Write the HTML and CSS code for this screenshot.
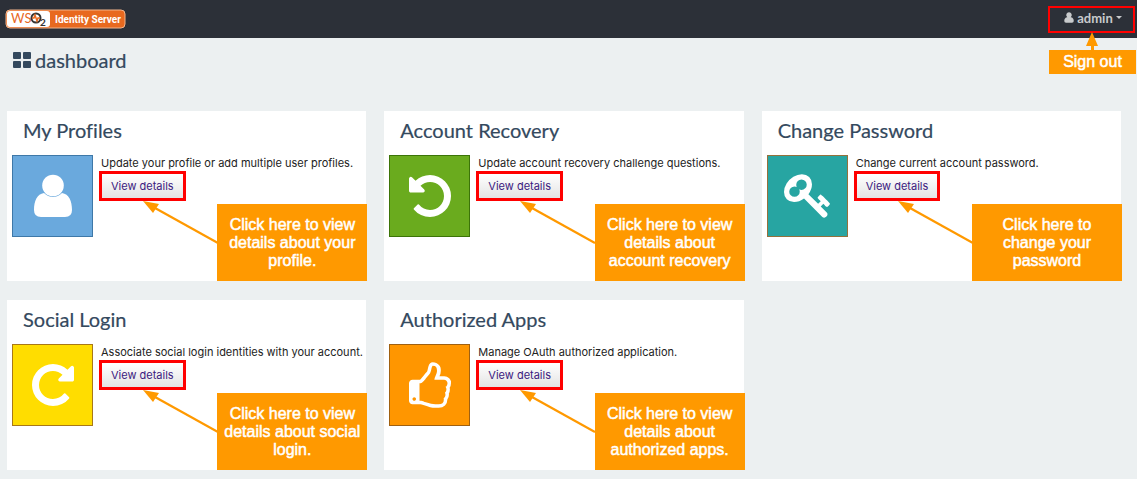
FILE: index.html
```html
<!DOCTYPE html>
<html lang="en">
<head>
<meta charset="utf-8">
<title>WSO2 Identity Server - Dashboard</title>
<link rel="stylesheet" href="styles.css">
</head>
<body>
<header class="topbar">
  <a class="brand" href="#" aria-label="WSO2 Identity Server">
    <svg class="brand-logo" viewBox="0 0 122 20" width="122" height="20">
      <rect x="1" y="1" width="119" height="18" rx="4" fill="#e8691f" stroke="#f3b58c"/>
      <rect x="2" y="2" width="43" height="16" rx="3" fill="#fff"/>
      <text class="brand-wso" x="6" y="14">WS</text>
      <circle cx="31" cy="9" r="4.500" fill="#fff" stroke="#333" stroke-width="2"/>
      <path d="M27 9h2l1-3 2 6 1-3h2" fill="none" stroke="#e8691f" stroke-width="1.500"/>
      <text class="brand-two" x="35" y="17">2</text>
      <text class="brand-name" x="50" y="14">Identity Server</text>
    </svg>
  </a>
  <div class="account">
    <button class="account-button" type="button">
      <svg viewBox="0 0 40 44" width="10" height="11"><path d="M20 1a11 11 0 0 1 7 19.500C35 21 39 27 39 36q0 7-7 7H8q-7 0-7-7C1 27 5 21 13 20.500A11 11 0 0 1 20 1z" fill="#c8cacc"/></svg>
      admin
      <svg viewBox="0 0 6 3" width="6" height="3"><path d="M0 0h6L3 3z" fill="#c8cacc"/></svg>
    </button>
    <div class="account-note">
      <svg class="account-arrow" viewBox="0 0 12 18" width="12" height="18"><path d="M6 0l6 14H8v4H5v-4H0z" fill="#f90"/></svg>
      Sign out
    </div>
  </div>
</header>

<main>
  <h1 class="page-title">
    <svg viewBox="0 0 18 16" width="18" height="16" fill="#34495e"><rect width="8" height="7" rx="1"/><rect x="10" width="8" height="7" rx="1"/><rect y="9" width="8" height="7" rx="1"/><rect x="10" y="9" width="8" height="7" rx="1"/></svg>
    dashboard
  </h1>

  <div class="cards">
    <section class="card">
      <h2>My Profiles</h2>
      <div class="card-body">
        <div class="tile tile-blue">
          <svg viewBox="0 0 44 44" width="44" height="44" fill="#fff"><path d="M13 19C6 20 3 27 3 36q0 7 7 7h24q7 0 7-7c0-9-3-16-10-17q-4 4-9 4t-9-4z"/><circle cx="22" cy="11.500" r="10.800"/></svg>
        </div>
        <div class="card-text">
          <p>Update your profile or add multiple user profiles.</p>
          <a class="details" href="#profiles">View details</a>
        </div>
      </div>
      <svg class="arrow" viewBox="0 0 75 43" width="75" height="43"><path d="M12 7L75 42" stroke="#f90" stroke-width="2.300"/><path d="M0 0l16 3-6 9z" fill="#f90"/></svg>
      <div class="note">Click here to view details about your profile.</div>
    </section>

    <section class="card">
      <h2>Account Recovery</h2>
      <div class="card-body">
        <div class="tile tile-green">
          <svg viewBox="0 128 1536 1536" width="42" height="42" fill="#fff"><path d="M1536 896q0 156-61 298t-164 245-245 164-298 61q-172 0-327-72.500T177 1387q-7-10-6.500-22.500t8.500-20.500l137-138q10-9 25-9 16 2 23 12 73 95 179 147t225 52q104 0 198.500-40.500T1130 1258t109.500-163.500T1280 896t-40.500-198.500T1130 534 966.500 424.500 768 384q-98 0-188 35.500T420 521l137 138q31 30 14 69-17 40-59 40H64q-26 0-45-19T0 704V256q0-42 40-59 39-17 69 14l130 129q107-101 244.500-156.500T768 128q156 0 298 61t245 164 164 245 61 298z"/></svg>
        </div>
        <div class="card-text">
          <p>Update account recovery challenge questions.</p>
          <a class="details" href="#recovery">View details</a>
        </div>
      </div>
      <svg class="arrow" viewBox="0 0 75 43" width="75" height="43"><path d="M12 7L75 42" stroke="#f90" stroke-width="2.300"/><path d="M0 0l16 3-6 9z" fill="#f90"/></svg>
      <div class="note">Click here to view details about account recovery</div>
    </section>

    <section class="card">
      <h2>Change Password</h2>
      <div class="card-body">
        <div class="tile tile-teal">
          <svg viewBox="0 128 1683 1600" width="46" height="44" fill="#fff"><path d="M832 512q0-80-56-136t-136-56-136 56-56 136q0 42 19 83-41-19-83-19-80 0-136 56t-56 136 56 136 136 56 136-56 56-136q0-42-19-83 41 19 83 19 80 0 136-56t56-136zm851 704q0 17-49 66t-66 49q-9 0-28.500-16t-36.500-33-38.500-40-24.500-26l-96 96 220 220q28 28 28 68 0 42-39 81t-81 39q-40 0-68-28l-671-671q-176 131-365 131-163 0-265.500-102.500T0 784q0-160 95-313t248-248 313-95q163 0 265.500 102.500T1024 496q0 189-131 365l355 355 96-96q-3-3-26-24.500t-40-38.500-33-36.500-16-28.500q0-17 49-66t66-49q13 0 23 10 6 6 46 44.500t82 79.500 86.500 86 73 78 28.500 41z"/></svg>
        </div>
        <div class="card-text">
          <p>Change current account password.</p>
          <a class="details" href="#password">View details</a>
        </div>
      </div>
      <svg class="arrow" viewBox="0 0 75 43" width="75" height="43"><path d="M12 7L75 42" stroke="#f90" stroke-width="2.300"/><path d="M0 0l16 3-6 9z" fill="#f90"/></svg>
      <div class="note">Click here to<br>change your<br>password</div>
    </section>

    <section class="card">
      <h2>Social Login</h2>
      <div class="card-body">
        <div class="tile tile-yellow">
          <svg viewBox="0 128 1536 1536" width="42" height="42" fill="#fff"><path transform="matrix(-1 0 0 1 1536 0)" d="M1536 896q0 156-61 298t-164 245-245 164-298 61q-172 0-327-72.500T177 1387q-7-10-6.500-22.500t8.500-20.500l137-138q10-9 25-9 16 2 23 12 73 95 179 147t225 52q104 0 198.500-40.500T1130 1258t109.500-163.500T1280 896t-40.500-198.500T1130 534 966.500 424.500 768 384q-98 0-188 35.500T420 521l137 138q31 30 14 69-17 40-59 40H64q-26 0-45-19T0 704V256q0-42 40-59 39-17 69 14l130 129q107-101 244.500-156.500T768 128q156 0 298 61t245 164 164 245 61 298z"/></svg>
        </div>
        <div class="card-text">
          <p>Associate social login identities with your account.</p>
          <a class="details" href="#social">View details</a>
        </div>
      </div>
      <svg class="arrow" viewBox="0 0 75 43" width="75" height="43"><path d="M12 7L75 42" stroke="#f90" stroke-width="2.300"/><path d="M0 0l16 3-6 9z" fill="#f90"/></svg>
      <div class="note">Click here to view details about social login.</div>
    </section>

    <section class="card">
      <h2>Authorized Apps</h2>
      <div class="card-body">
        <div class="tile tile-orange">
          <svg viewBox="0 0 1536 1664" width="42" height="46" fill="#fff"><path d="M256 1344q0-26-19-45t-45-19-45 19-19 45 19 45 45 19 45-19 19-45zm1152-576q0-51-39-89.500t-89-38.500H928q0-58 48-159.500t48-160.500q0-98-32-145t-128-47q-26 26-38 85t-30.500 125.500T736 448q-22 23-77 91-4 5-23 30t-31.500 41-34.500 42.500-40 44-38.500 35.500-40 27-35.500 9h-32v640h32q13 0 31.500 3t33 6.500 38 11 35 11.500 35.500 12.500 29 10.500q211 73 342 73h121q192 0 192-167 0-26-5-56 30-16 47.500-52.500t17.500-73.500-18-69q53-50 53-119 0-25-10-55.500t-25-47.500q32-1 53.500-47t21.500-81zm128-1q0 89-49 163 9 33 9 69 0 77-38 144 3 21 3 43 0 101-60 178 1 139-85 219.500t-227 80.500H960q-96 0-189.500-22.500T554 1576q-116-40-138-40H128q-53 0-90.500-37.500T0 1408V768q0-53 37.500-90.500T128 640h274q36-24 137-155 58-75 107-128 24-25 35.500-85.500t30.500-126.500 62-108q39-37 90-37 84 0 151 32.500T1127 134t35 186q0 93-48 192h176q104 0 180 76t76 179z"/></svg>
        </div>
        <div class="card-text">
          <p>Manage OAuth authorized application.</p>
          <a class="details" href="#apps">View details</a>
        </div>
      </div>
      <svg class="arrow" viewBox="0 0 75 43" width="75" height="43"><path d="M12 7L75 42" stroke="#f90" stroke-width="2.300"/><path d="M0 0l16 3-6 9z" fill="#f90"/></svg>
      <div class="note">Click here to view details about authorized apps.</div>
    </section>
  </div>
</main>
</body>
</html>
```
FILE: styles.css
```css
* { box-sizing: border-box; }

body {
  margin: 0;
  background: #ecf0f1;
  color: #222;
  font: 11px/16px Inter, "Liberation Sans", sans-serif;
}

svg { flex: none; }

.topbar {
  display: flex;
  justify-content: space-between;
  align-items: center;
  height: 38px;
  padding: 0 2px 0 5px;
  background: #2c3038;
}

.brand-logo { display: block; }
.brand-wso { font: 13px Lato, sans-serif; fill: #e8691f; }
.brand-two { font: bold 10px Lato, sans-serif; fill: #333; }
.brand-name { font: bold 10px Roboto, sans-serif; fill: #fff; }

.account { position: relative; }

.account-button {
  display: flex;
  align-items: center;
  justify-content: center;
  gap: 3px;
  width: 87px;
  height: 27px;
  padding: 0 0 3px 3px;
  border: 2px solid #f00;
  background: none;
  color: #c8cacc;
  font: bold 13px Lato, sans-serif;
}

.account-note,
.note {
  display: flex;
  align-items: center;
  justify-content: center;
  position: absolute;
  background: #f90;
  color: #fff;
  text-align: center;
  font-family: "Liberation Sans", Arial, sans-serif;
  font-size: 16px;
  line-height: 18px;
  -webkit-text-stroke: 0.5px #fff;
}

.account-note {
  top: 44px;
  right: -1px;
  width: 87px;
  height: 24px;
}

.account-arrow {
  position: absolute;
  left: 37px;
  bottom: 100%;
}

.page-title {
  display: flex;
  align-items: center;
  gap: 4px;
  margin: 0;
  padding: 10px 13px 39px;
  color: #34495e;
  font: 20px/24px Lato, sans-serif;
  -webkit-text-stroke: 0.2px #34495e;
}

.cards {
  display: grid;
  grid-template-columns: repeat(3, minmax(0, 1fr));
  gap: 19px 18px;
  padding: 0 16px 9px 7px;
}

.card {
  position: relative;
  min-height: 170px;
  padding: 7px 5px;
  background: #fff;
}

.card h2 {
  margin: 0 0 13px 11px;
  color: #34495e;
  font: 20px/24px Lato, sans-serif;
  font-variant-ligatures: none;
  -webkit-text-stroke: 0.2px #34495e;
}

.card-body {
  display: flex;
  gap: 6px;
}

.tile {
  display: flex;
  flex: none;
  align-items: center;
  justify-content: center;
  width: 81px;
  height: 82px;
  border: 1px solid;
}

.tile-blue { background: #6aa9dd; border-color: #3e78a8; }
.tile-green { background: #6aab1e; border-color: #3c7408; }
.tile-teal { background: #27a5a2; border-color: #94713c; }
.tile-yellow { background: #fd0; border-color: #a87818; }
.tile-orange { background: #ff9600; border-color: #a06010; }

.card-text p {
  margin: 0 0 0 2px;
  white-space: nowrap;
}

.details {
  display: inline-block;
  padding: 4px 9px;
  border: 3px solid #f00;
  background: linear-gradient(#fff, #e4e4e4);
  color: #3b1a80;
  text-decoration: none;
}

.arrow {
  position: absolute;
  left: 136px;
  top: 90px;
  fill: none;
}

.note {
  right: -1px;
  bottom: 0;
  width: 150px;
  height: 77px;
}
```
